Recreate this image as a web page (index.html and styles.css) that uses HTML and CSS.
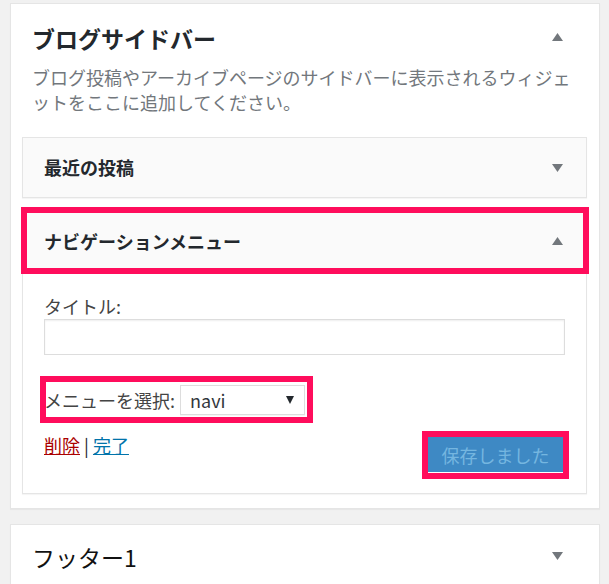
FILE: index.html
```html
<!DOCTYPE html>
<html lang="ja">
<head>
<meta charset="utf-8">
<title>ウィジェット</title>
<link rel="stylesheet" href="styles.css">
</head>
<body>
<div class="sidebar">
  <div class="sidebar-head">
    <h2 class="sidebar-title">ブログサイドバー</h2>
    <svg class="arrow arrow-head" width="11" height="8" viewBox="0 0 11 8"><polygon points="5.5,0 11,8 0,8" fill="#72777c"/></svg>
  </div>
  <p class="sidebar-desc">ブログ投稿やアーカイブページのサイドバーに表示されるウィジェットをここに追加してください。</p>

  <div class="widget">
    <div class="widget-top">
      <h3 class="widget-title">最近の投稿</h3>
      <svg class="arrow" width="11" height="8" viewBox="0 0 11 8"><polygon points="0,0 11,0 5.5,8" fill="#72777c"/></svg>
    </div>
  </div>

  <div class="widget widget-open">
    <div class="widget-top widget-top-open mark">
      <h3 class="widget-title">ナビゲーションメニュー</h3>
      <svg class="arrow" width="11" height="8" viewBox="0 0 11 8"><polygon points="5.5,0 11,8 0,8" fill="#72777c"/></svg>
    </div>
    <div class="widget-inside">
      <label class="field-label">タイトル:</label>
      <div class="text-input"></div>
      <div class="menu-row mark-row">
        <span class="field-label">メニューを選択:</span>
        <div class="select">
          <span class="select-value">navi</span>
          <svg width="8" height="8" viewBox="0 0 8 8"><polygon points="0,0 8,0 4,8" fill="#23282d"/></svg>
        </div>
      </div>
      <div class="actions">
        <div class="links"><a class="link-delete" href="#">削除</a> <span class="sep">|</span> <a class="link-done" href="#">完了</a></div>
        <div class="button-wrap mark-btn"><span class="button-saved">保存しました</span></div>
      </div>
    </div>
  </div>
</div>

<div class="sidebar sidebar-closed">
  <div class="sidebar-head">
    <h2 class="sidebar-title sidebar-title-light">フッター1</h2>
    <svg class="arrow arrow-head" width="11" height="8" viewBox="0 0 11 8"><polygon points="0,0 11,0 5.5,8" fill="#72777c"/></svg>
  </div>
</div>
</body>
</html>
```

FILE: styles.css
```css
* { box-sizing: border-box; }

body {
  margin: 0;
  background: #f1f1f1;
  font-family: "Noto Sans CJK JP", "Noto Sans", sans-serif;
  color: #23282d;
}

.sidebar {
  margin: 3px 9px 0 10px;
  background: #fff;
  border: 1px solid #e5e5e5;
  box-shadow: 0 1px 1px rgba(0,0,0,.04);
  padding: 0 12px 14px 11px;
}

.sidebar-closed {
  margin-top: 15px;
  min-height: 80px;
}

.sidebar-closed .sidebar-head { padding-top: 18px; }

.sidebar-head {
  display: flex;
  align-items: center;
  justify-content: space-between;
  padding: 20px 24px 0 10px;
}

.sidebar-title {
  margin: 0;
  font-size: 23px;
  line-height: 28px;
  font-weight: 700;
  color: #23282d;
}

.sidebar-title-light { font-weight: 400; color: #111; }

.arrow { display: block; flex: none; }
.arrow-head { margin-bottom: 3px; }

.sidebar-desc {
  margin: 13px 0 0 10px;
  font-size: 18px;
  line-height: 25px;
  color: #72777c;
  line-break: loose;
}

.widget {
  margin-top: 22px;
  border: 1px solid #e5e5e5;
  background: #fafafa;
  box-shadow: 0 1px 1px rgba(0,0,0,.04);
}

.widget-open {
  margin-top: 10px;
  background: #fff;
}

.widget-top {
  display: flex;
  align-items: center;
  justify-content: space-between;
  height: 59px;
  padding: 0 23px 0 21px;
  background: #fafafa;
}

.widget-top-open { height: 64px; }

.widget-title {
  margin: 0;
  font-size: 18px;
  line-height: 25px;
  font-weight: 700;
  color: #23282d;
}

.mark, .mark-row, .mark-btn { position: relative; }

.mark::after,
.mark-row::after,
.mark-btn::after {
  content: "";
  position: absolute;
  border: 6px solid #ff0d5c;
  pointer-events: none;
}

.mark::after { left: -2px; right: -3px; top: -2px; bottom: -1px; }
.mark-row::after { left: -4px; right: -8px; top: -9px; bottom: -8px; }
.mark-btn::after { left: -6px; right: -6px; top: -6px; bottom: -6px; }

.widget-inside {
  padding: 21px 21px 20px;
  background: #fff;
}

.field-label {
  display: block;
  font-size: 18px;
  line-height: 25px;
  color: #444;
}

.text-input {
  height: 36px;
  border: 1px solid #ddd;
  box-shadow: inset 0 1px 2px rgba(0,0,0,.07);
  background: #fff;
}

.menu-row {
  display: inline-flex;
  align-items: center;
  gap: 5px;
  margin-top: 30px;
}

.menu-row .field-label { display: inline; }

.select {
  display: flex;
  align-items: center;
  justify-content: space-between;
  width: 125px;
  height: 30px;
  padding: 0 10px 0 9px;
  border: 1px solid #ddd;
  background: #fff;
  box-shadow: 0 1px 0 rgba(0,0,0,.04);
}

.select-value {
  font-size: 18px;
  line-height: 25px;
  color: #32373c;
}

.actions {
  display: flex;
  justify-content: space-between;
  align-items: flex-start;
  margin-top: 18px;
}

.links {
  font-size: 18px;
  line-height: 25px;
  color: #555;
}

.link-delete { color: #a00; text-decoration: underline; }
.link-done { color: #0073aa; text-decoration: underline; }
.sep { color: #23282d; }

.button-wrap {
  margin: 4px 2px 0 0;
}

.button-saved {
  display: block;
  width: 135px;
  height: 36px;
  background: #3e89c4;
  color: #75b6e0;
  font-size: 18px;
  line-height: 36px;
  text-align: center;
  border-bottom: 1px solid #fff;
}
```
